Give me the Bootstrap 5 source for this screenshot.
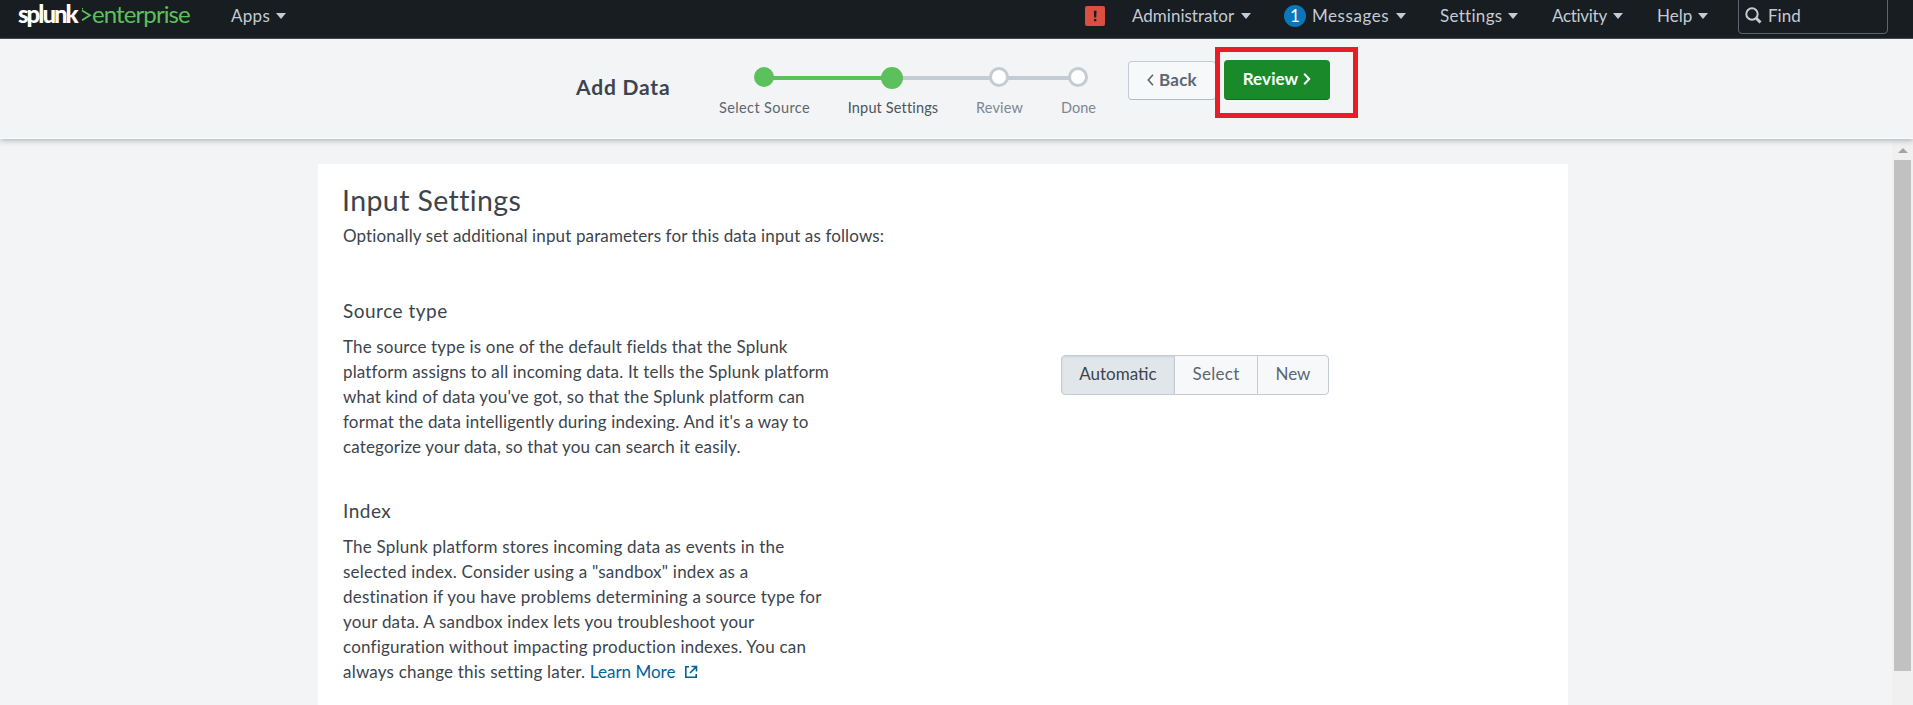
<!DOCTYPE html>
<html lang="en">
<head>
<meta charset="utf-8">
<meta name="viewport" content="width=device-width, initial-scale=1">
<title>Add Data - Input Settings | Splunk</title>
<link href="https://cdn.jsdelivr.net/npm/bootstrap@5.3.0/dist/css/bootstrap.min.css" rel="stylesheet">
<style>
  body { height: 705px; background: #f2f4f5; color: #3c444d; font: 17px/25px Lato, "Open Sans", sans-serif; }
  .topbar { height: 39px; background: #171d21; border-bottom: 1px solid #47484c; color: #c3cbd4; line-height: 30px; padding: 0 25px 0 19px; }
  .brand-logo { font-size: 24px; line-height: 27px; width: 174px; color: #fff; }
  .brand-logo b { font-weight: 900; letter-spacing: -2px; width: 62px; margin-left: -1px; margin-right: 1px; }
  .brand-logo i { font-style: normal; color: #5cc05c; letter-spacing: -.9px; }
  .menu-link { color: inherit; text-decoration: none; height: 31px; }
  .tri { width: 0; height: 0; border: 5px solid transparent; border-top: 6px solid #c3cbd4; border-bottom: 0; }
  .w-apps { width: 55px; margin-left: 38px; letter-spacing: .3px; }
  .w-admin { width: 119px; margin-left: 27px; }
  .w-msg { width: 122px; margin-left: 33px; letter-spacing: .55px; }
  .w-set { width: 78px; margin-left: 34px; letter-spacing: .3px; }
  .w-act { width: 71px; margin-left: 34px; letter-spacing: -.3px; }
  .w-help { width: 51px; margin-left: 34px; }
  .alert-sq { width: 20px; height: 20px; margin-top: 6px; }
  .count { width: 22px; height: 22px; background: #0877bb; color: #fff; margin-right: 6px; line-height: 22px; letter-spacing: 0; }
  .finder { width: 150px; height: 35px; margin: -1px 0 0 30px; border: 1px solid #5c6773; border-radius: 0 0 4px 4px; padding: 1px 6px 0; }
  .finder svg { margin: 6px 6px 0 0; }
  .wizard { height: 100px; background: #f2f4f5; border-bottom: 1px solid #fafbfb; box-shadow: 0 1px 6px rgba(60,80,95,.45); padding-left: 576px; z-index: 2; }
  .wizard h1 { font-size: 21px; font-weight: 700; letter-spacing: .8px; line-height: 26px; margin: 35px 0 0; width: 143px; }
  .steps { gap: 38px; height: 88px; font-size: 14.5px; line-height: 20px; margin-right: 32px; color: #7d8794; }
  .steps::before { content: ""; position: absolute; left: 44px; top: 37px; width: 315px; height: 4px; background: linear-gradient(90deg, #5cc05c 128px, #c3cbd4 128px); }
  .step { position: relative; white-space: nowrap; padding-top: 28px; }
  .dot { flex: none; width: 20px; height: 20px; border: 3px solid #c3cbd4; background: #fff; margin: 0 2px 11px 0; }
  .done .dot { background: #5cc05c; border-color: #5cc05c; }
  .now .dot { width: 22px; height: 22px; margin: 0 3px 9px 0; }
  .done { color: #5c6773; }
  .now { color: #4c545d; }
  .s1 { width: 91px; letter-spacing: .4px; } .s2 { width: 90px; letter-spacing: .15px; } .s3 { width: 47px; letter-spacing: .15px; } .s4 { width: 35px; }
  .btn-wiz { border-radius: 4px; font-size: 17px; line-height: 24px; padding: 0 0 2px; gap: 5px; }
  .btn-back { width: 88px; height: 39px; margin-top: 22px; background: #f7f8fa; border: 1px solid #c3cbd4; border-bottom-color: #b3bcc5; color: #5c6773; font-weight: 700; letter-spacing: .2px; }
  .btn-review { width: 106px; height: 40px; margin: 21px 0 0 8px; background: #1a8929; border: 0; border-bottom: 1px solid #146b20; color: #fff; font-weight: 700; letter-spacing: .1px; }
  .callout { position: absolute; left: 1215px; top: 8px; width: 143px; height: 71px; border: 5px solid #e81d25; }
  .panel { width: 1250px; height: 541px; margin: 25px 0 0 318px; background: #fff; padding: 18px 25px 0; }
  .panel h2 { font-size: 28.5px; line-height: 36px; font-weight: 400; letter-spacing: .4px; margin: 0 0 5px -1px; }
  .panel h3 { font-size: 19px; line-height: 25px; font-weight: 400; letter-spacing: .5px; margin: 0 0 11px; }
  .panel p { margin: 0; letter-spacing: .16px; white-space: nowrap; }
  .panel .intro { margin-bottom: 50px; letter-spacing: .13px; }
  .desc { width: 718px; }
  .index-block { margin-top: 39px; }
  .panel .wider { letter-spacing: .21px; }
  .wider a { color: #006297; text-decoration: none; letter-spacing: 0; }
  .wider svg { vertical-align: -1px; }
  .choice { height: 40px; margin-top: 57px; }
  .choice .btn { background: #f7f8fa; border: 1px solid #c3cbd4; border-radius: 4px; color: #5c6773; font-size: 17px; line-height: 24px; padding: 5px 0 7px; }
  .choice .picked { background: #e1e6eb; color: #3c444d; box-shadow: inset 0 1px 2px rgba(60,80,95,.12); }
  .c1 { width: 114px; } .c2 { width: 84px; letter-spacing: .3px; } .c3 { width: 72px; }
  .scroller { width: 21px; height: 566px; background: #f0f0f0; padding: 9px 2px 0; }
  .thumb { width: 17px; height: 511px; background: #c1c1c1; margin-top: 7px; }
</style>
</head>
<body class="overflow-hidden">
<nav class="topbar d-flex">
  <a class="brand-logo d-flex text-decoration-none" href="#"><b>splunk</b><svg width="11" height="26" viewBox="0 0 11 26" fill="none" stroke="#5cc05c" stroke-width="1.8"><path d="M1 10.5 9 15.3 1 20.2"/><path d="M1.5 8v1.5" stroke-width="1"/></svg><i>enterprise</i></a>
  <a class="menu-link w-apps d-flex align-items-center" href="#">Apps<span class="tri ms-auto"></span></a>
  <div class="d-flex ms-auto">
    <svg class="alert-sq" viewBox="0 0 20 20"><rect width="20" height="20" rx="2" fill="#dc4e41"/><path d="M8.8 4.8h2.8l-.4 6.6H9.2z M9 13h2.3v2.3H9z" fill="#171d21"/></svg>
    <a class="menu-link w-admin d-flex align-items-center" href="#">Administrator<span class="tri ms-auto"></span></a>
    <a class="menu-link w-msg d-flex align-items-center" href="#"><span class="count rounded-circle text-center">1</span>Messages<span class="tri ms-auto"></span></a>
    <a class="menu-link w-set d-flex align-items-center" href="#">Settings<span class="tri ms-auto"></span></a>
    <a class="menu-link w-act d-flex align-items-center" href="#">Activity<span class="tri ms-auto"></span></a>
    <a class="menu-link w-help d-flex align-items-center" href="#">Help<span class="tri ms-auto"></span></a>
    <div class="finder d-flex"><svg width="17" height="17" viewBox="0 0 17 17" fill="none" stroke="#c3cbd4"><circle cx="7" cy="7" r="5.7" stroke-width="2"/><path d="M11 11l4.5 4.5" stroke-width="3"/></svg><span>Find</span></div>
  </div>
</nav>
<header class="wizard d-flex position-relative">
  <h1>Add Data</h1>
  <div class="steps d-flex position-relative">
    <div class="step done s1 d-flex flex-column align-items-center"><span class="dot rounded-circle"></span>Select Source</div>
    <div class="step done now s2 d-flex flex-column align-items-center"><span class="dot rounded-circle"></span>Input Settings</div>
    <div class="step s3 d-flex flex-column align-items-center"><span class="dot rounded-circle"></span>Review</div>
    <div class="step s4 d-flex flex-column align-items-center"><span class="dot rounded-circle"></span>Done</div>
  </div>
  <button class="btn btn-wiz btn-back d-flex align-items-center justify-content-center"><svg width="7" height="12" viewBox="0 0 7 12" fill="none" stroke="currentColor" stroke-width="1.6"><path d="M6 .8 1.3 6 6 11.2"/></svg>Back</button>
  <button class="btn btn-wiz btn-review d-flex align-items-center justify-content-center">Review<svg width="8" height="12" viewBox="0 0 8 12" fill="none" stroke="currentColor" stroke-width="2"><path d="M1.2.8 6.2 6 1.2 11.2"/></svg></button>
  <div class="callout"></div>
</header>
<main class="d-flex justify-content-between">
  <section class="panel">
    <h2>Input Settings</h2>
    <p class="intro">Optionally set additional input parameters for this data input as follows:</p>
    <div class="d-flex">
      <div class="desc">
        <h3>Source type</h3>
        <p>The source type is one of the default fields that the Splunk<br>platform assigns to all incoming data. It tells the Splunk platform<br>what kind of data you've got, so that the Splunk platform can<br>format the data intelligently during indexing. And it's a way to<br>categorize your data, so that you can search it easily.</p>
      </div>
      <div class="choice btn-group">
        <button class="btn picked c1">Automatic</button>
        <button class="btn c2">Select</button>
        <button class="btn c3">New</button>
      </div>
    </div>
    <div class="desc index-block">
      <h3>Index</h3>
      <p class="wider">The Splunk platform stores incoming data as events in the<br>selected index. Consider using a "sandbox" index as a<br>destination if you have problems determining a source type for<br>your data. A sandbox index lets you troubleshoot your<br>configuration without impacting production indexes. You can<br>always change this setting later. <a href="#">Learn More <svg class="ms-1" width="14" height="14" viewBox="0 0 14 14" fill="none" stroke="currentColor" stroke-width="1.6"><path d="M5 1.8H1.8v10.4h10.4V9M7.5 1.5h5v5M12 2 6 8"/></svg></a></p>
    </div>
  </section>
  <div class="scroller"><svg class="d-block mx-auto" width="10" height="5" viewBox="0 0 10 5"><path d="M0 5 5 0l5 5z" fill="#a3a3a3"/></svg><div class="thumb"></div></div>
</main>
<script src="https://cdn.jsdelivr.net/npm/bootstrap@5.3.0/dist/js/bootstrap.bundle.min.js"></script>
</body>
</html>
